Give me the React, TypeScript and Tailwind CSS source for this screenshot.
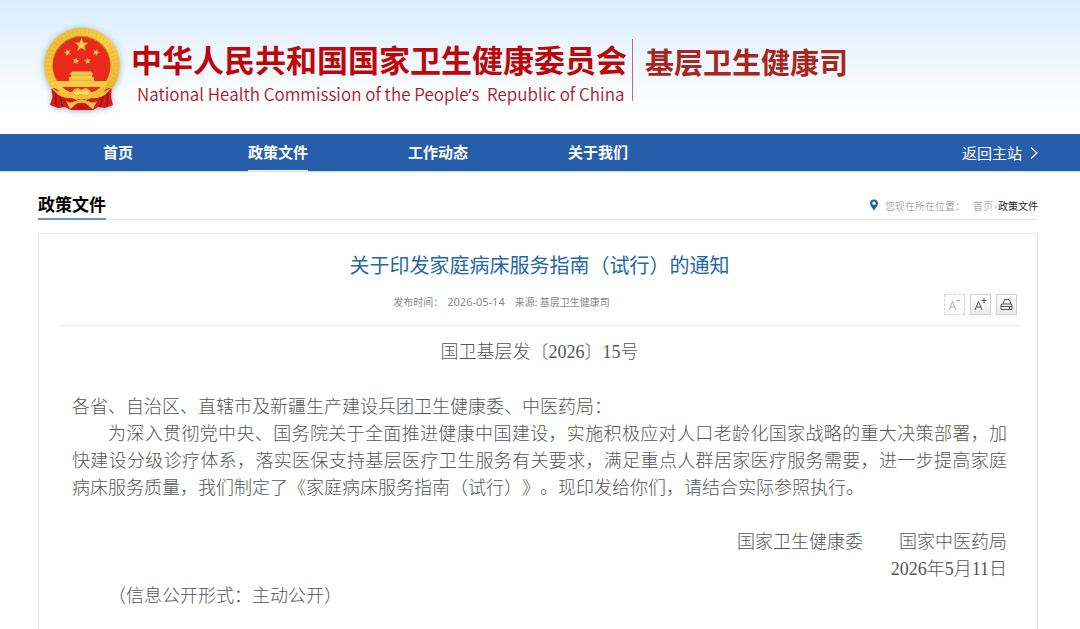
const navItems = [
  { href: "#home", label: "首页" },
  { href: "#policy", label: "政策文件" },
  { href: "#work", label: "工作动态" },
  { href: "#about", label: "关于我们" },
];

const currentPath = "#policy";

const STAR =
  "M0 -10 L2.6 -3.4 L9.5 -3.1 L4.1 1.3 L5.9 8.1 L0 4.3 L-5.9 8.1 L-4.1 1.3 L-9.5 -3.1 L-2.6 -3.4 Z";

const smallStars = [
  { x: 24.5, y: 25.5, r: -20 },
  { x: 33, y: 34, r: 10 },
  { x: 44.5, y: 34, r: -10 },
  { x: 53, y: 25.5, r: 20 },
];

function Emblem() {
  return (
    <svg
      viewBox="0 0 78 84"
      className="h-[84px] w-[78px] shrink-0 overflow-visible drop-shadow-[0_1px_3px_rgba(70,100,150,0.5)]"
      role="img"
      aria-label="国徽"
    >
      <defs>
        <linearGradient id="gold" x1="0" y1="0" x2="1" y2="1">
          <stop offset="0" stopColor="#e9b62f" />
          <stop offset="0.5" stopColor="#f8d04a" />
          <stop offset="1" stopColor="#e6ac2c" />
        </linearGradient>
      </defs>
      <circle cx="39" cy="38.5" r="38" fill="url(#gold)" />
      <circle cx="39" cy="38.5" r="33.5" fill="none" stroke="#d59a20" strokeWidth="5" strokeDasharray="1 3" opacity="0.3" />
      <circle cx="38.5" cy="38" r="29.3" fill="#c98512" />
      <circle cx="38.5" cy="38.7" r="28.7" fill="#e8291c" />
      <path d={STAR} transform="translate(38.5 18) scale(0.72)" fill="#f7cf4c" stroke="#b5701a" strokeWidth="0.6" />
      {smallStars.map((s) => (
        <path
          key={s.x}
          d={STAR}
          transform={`translate(${s.x} ${s.y}) rotate(${s.r}) scale(0.36)`}
          fill="#f7c64c"
        />
      ))}
      {/* gate tower */}
      <path d="M29 44.5 H48 L50.5 47.5 H49 V50 H51 V54 H64.5 L62 60 H15 L12.5 54 H26 V50 H28 V47.5 H26.5 Z" fill="#f9cb48" />
      <path d="M28 48.3 H49 M26.5 53.2 H50.5" stroke="#e29b2a" strokeWidth="0.7" />
      {/* drapery */}
      <path d="M8.5 62 C12 60 16 63 18 68 L32 72 H45 L59 68 C61 63 65 60 68.5 62 L68 70 L70 78 L62 81 L55 80 L50 83 H28 L22 80 L15 81 L7 78 L9.5 70 Z" fill="#d31a17" />
      <path d="M12 64 C14 69 12 74 13 79 M16 66 C19 71 17 75 20 79 M65 64 C63 69 65 74 64 79 M61 66 C58 71 60 75 57 79" fill="none" stroke="#960f12" strokeWidth="1.3" />
      <path d="M9 61 C17 66 22 67 29 65 C31 61 35 60 38.5 63 C42 60 46 61 48 65 C55 67 60 66 68 61 C63 69 56 72 48 71 L43 73 C40 70 37 70 34 73 L29 71 C21 72 14 69 9 61 Z" fill="#f5c13a" />
      <path d="M30 66 C33 62 36 63 38.5 65 C41 63 44 62 47 66 L44 69 C41 67 36 67 33 69 Z" fill="#fbdc72" stroke="#dc9a2a" strokeWidth="0.6" />
      <path d="M23 74 C26 76 29 76 32 74 C33 77 31 80 27 82 C26 79 24 77 23 74 Z M54 74 C51 76 48 76 45 74 C44 77 46 80 50 82 C51 79 53 77 54 74 Z" fill="#f8c843" />
      <path d="M31 76 C34 71 43 71 46 76 L45 78 C42 75 35 75 32 78 Z" fill="#f3b935" />
      <path d="M33 82.5 C35 76.5 42 76.5 44 82.5 Z" fill="#c41214" />
    </svg>
  );
}

function SiteHeader() {
  return (
    <header className="bg-linear-to-b from-[#dbedff] to-white to-85%">
      <div className="flex h-[134px] items-start pt-[27px] pr-[42px] pl-[43px]">
        <Emblem />
        <div className="ml-2.5 pt-3">
          <h1 className="text-[31px] leading-10 font-bold whitespace-nowrap text-[#bd0709]">
            中华人民共和国国家卫生健康委员会
          </h1>
          <p lang="en" className="pl-1.5 text-[17px] leading-[30px] font-[350] whitespace-pre text-[#b01a1e]">
            National Health Commission of the People
            <span className="font-['Noto_Sans',sans-serif] font-normal">’</span>
            {"s  Republic of China"}
          </p>
        </div>
        <div className="mt-3 ml-[5px] h-[62px] border-l border-[#c76a6c] pt-0.5 pl-3">
          <p className="text-[29px] leading-10 font-bold whitespace-nowrap text-[#a9261c]">
            基层卫生健康司
          </p>
        </div>
      </div>
    </header>
  );
}

function NavBar() {
  return (
    <nav className="border-b border-[#c9dcf2] bg-[#265eab] text-[15px] text-white">
      <div className="flex h-[37px] justify-between pr-[42px] pl-[38px]">
        <ul className="flex">
          {navItems.map((item) => (
            <li key={item.href} className="flex w-40 justify-center">
              <a
                href={item.href}
                className={
                  item.href === currentPath
                    ? "border-b border-white font-bold leading-9"
                    : "font-bold leading-9"
                }
              >
                {item.label}
              </a>
            </li>
          ))}
        </ul>
        <a href="#main" className="flex items-center gap-2 leading-9">
          返回主站
          <svg viewBox="0 0 8 14" className="h-3.5 w-2" fill="none" stroke="currentColor" strokeWidth="1.1">
            <path d="M1 1.5 L7 7 L1 12.5" />
          </svg>
        </a>
      </div>
    </nav>
  );
}

function Breadcrumb() {
  return (
    <div className="flex items-center text-[10px] text-[#888]">
      <svg viewBox="0 0 10 13" className="mr-1.5 h-3 w-2.5">
        <path
          fillRule="evenodd"
          fill="#1f63a5"
          d="M5 0.5 C2.3 0.5 0.7 2.4 0.7 4.7 C0.7 7.6 3.5 9.8 5 12.7 C6.5 9.8 9.3 7.6 9.3 4.7 C9.3 2.4 7.7 0.5 5 0.5 Z M5 2.8 A1.9 1.9 0 1 1 5 6.6 A1.9 1.9 0 1 1 5 2.8 Z"
        />
      </svg>
      <span className="mr-2 font-light">您现在所在位置：</span>
      <a href="#home" className="font-light">首页</a>
      <span className="px-px font-light">›</span>
      <a href="#policy" className="text-[#222]">政策文件</a>
    </div>
  );
}

function ArticleTools() {
  return (
    <div className="flex gap-[5px] pt-[13px] pr-[3px] text-[#555]">
      <button
        aria-label="缩小字号"
        className="flex size-[21px] items-center justify-center border border-dashed border-[#d4d4d4] text-[#aaa]"
      >
        <svg viewBox="0 0 15 15" className="size-[15px]" fill="none" stroke="currentColor">
          <path d="M2 13 L5.5 4.5 L9 13 M3.2 10 H7.8 M9 3.5 H13" />
        </svg>
      </button>
      <button
        aria-label="放大字号"
        className="flex size-[21px] items-center justify-center border border-[#d0d0d0] bg-linear-to-b from-white to-[#ececec]"
      >
        <svg viewBox="0 0 15 15" className="size-[15px]" fill="none" stroke="currentColor">
          <path d="M2 13 L5.5 4.5 L9 13 M3.2 10 H7.8 M8.5 3.5 H13.5 M11 1 V6" />
        </svg>
      </button>
      <button
        aria-label="打印"
        className="flex size-[21px] items-center justify-center border border-[#d0d0d0] bg-linear-to-b from-white to-[#ececec]"
      >
        <svg viewBox="0 0 13 13" className="size-[13px]" fill="none" stroke="currentColor">
          <path d="M3 6 L4.5 1.5 H9 L10.5 3.5 V6 M3 6 H1.5 L1 7.5 V11.5 H12 V7.5 L11.5 6 H3 M1 8.5 H12 M9.5 8.5 V11.5" />
        </svg>
      </button>
    </div>
  );
}

function Article() {
  return (
    <article className="mt-[13px] flex-1 border border-b-0 border-[#e6e6e6] pr-[17px] pl-5">
      <h3 className="pt-[15px] text-center text-xl leading-8 text-[#2567a4]">
        关于印发家庭病床服务指南（试行）的通知
      </h3>
      <div className="flex h-[45px] items-start border-b border-[#e8e8e8]">
        <p className="flex flex-1 items-center justify-center pt-3 text-[10px] leading-[18px] text-[#888]">
          <span>发布时间：</span>
          <span className="mr-2.5 ml-1 font-['Noto_Sans',sans-serif] text-[11px]">2026-05-14</span>
          <span>来源: 基层卫生健康司</span>
        </p>
        <ArticleTools />
      </div>
      <div className="px-[13px] pt-[13px] text-justify font-['Liberation_Serif','Noto_Sans_CJK_SC',serif] text-lg leading-[27px] font-light text-[#555]">
        <p className="mb-7 text-center">国卫基层发〔2026〕15号</p>
        <p>各省、自治区、直辖市及新疆生产建设兵团卫生健康委、中医药局：</p>
        <p className="indent-9">
          为深入贯彻党中央、国务院关于全面推进健康中国建设，实施积极应对人口老龄化国家战略的重大决策部署，加快建设分级诊疗体系，落实医保支持基层医疗卫生服务有关要求，满足重点人群居家医疗服务需要，进一步提高家庭病床服务质量，我们制定了《家庭病床服务指南（试行）》。现印发给你们，请结合实际参照执行。
        </p>
        <p className="mt-[27px] flex justify-end gap-9">
          <span>国家卫生健康委</span>
          <span>国家中医药局</span>
        </p>
        <p className="text-right">2026年5月11日</p>
        <p className="indent-9">（信息公开形式：主动公开）</p>
      </div>
    </article>
  );
}

export default function App() {
  return (
    <div
      lang="zh-CN"
      className="flex min-h-screen flex-col bg-white font-['Noto_Sans_CJK_SC',sans-serif] [text-spacing-trim:space-all]"
    >
      <SiteHeader />
      <NavBar />
      <main className="flex flex-1 flex-col pt-[19px] pr-[42px] pl-[38px]">
        <div className="flex justify-between border-b border-[#e6e6e6]">
          <h2 className="-mb-px border-b-2 border-[#6595c9] pb-px text-[17px] leading-[26px] font-bold text-black">
            政策文件
          </h2>
          <Breadcrumb />
        </div>
        <Article />
      </main>
    </div>
  );
}
